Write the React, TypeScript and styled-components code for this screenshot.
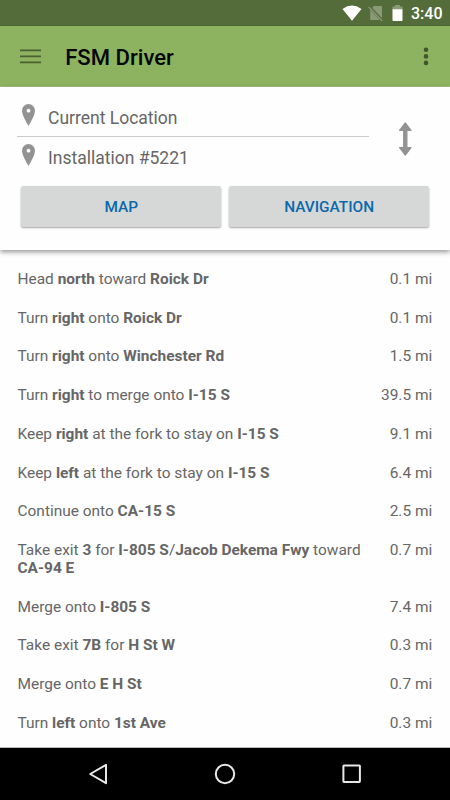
import React from "react";
import styled, { createGlobalStyle } from "styled-components";

const Global = createGlobalStyle`
  * { box-sizing: border-box; }
  body { margin: 0; background: #fefefe; font-family: Roboto, sans-serif; overflow: hidden; }
  svg { display: block; flex: none; }
`;

const Screen = styled.div`
  width: 450px;
  height: 800px;
  display: flex;
  flex-direction: column;
  background: #fefefe;
  color: #666;
`;

const StatusBar = styled.header`
  height: 26px;
  flex: none;
  display: flex;
  justify-content: flex-end;
  align-items: center;
  padding: 2px 8px 0 0;
  background: #546c39;
  border-bottom: 1px solid #4d6633;
`;

const Clock = styled.span`
  width: 31px;
  margin-left: 7px;
  font-size: 16px;
  font-weight: 500;
  line-height: 20px;
  padding-top: 1px;
  color: #fff;
  white-space: nowrap;
`;

const Toolbar = styled.div`
  height: 61px;
  flex: none;
  display: flex;
  align-items: center;
  padding: 0 19px 0 20px;
  background: #8db360;
  border-bottom: 1px solid #a3c17f;
`;

const Title = styled.h1`
  flex: 1;
  margin: 2px 0 0 24.2px;
  font-size: 22.1px;
  line-height: 28px;
  font-weight: 500;
  color: #050703;
`;

const RoutePanel = styled.section`
  height: 163px;
  flex: none;
  padding: 10px 21px 0 17px;
  background: #fefefe;
  box-shadow: 0 2px 5px rgba(0, 0, 0, 0.42);
  position: relative;
`;

const RouteTop = styled.div`
  display: flex;
`;

const Fields = styled.div`
  width: 352px;
`;

const Field = styled.div<{ $ruled?: boolean }>`
  height: 40px;
  display: flex;
  align-items: center;
  gap: 12px;
  padding: 2px 0 0 5px;
  font-size: 17.5px;
  line-height: 24px;
  border-bottom: 1px solid ${(p) => (p.$ruled ? "#cacaca" : "transparent")};
  svg { margin-bottom: 4px; }
`;

const Swap = styled.div`
  padding: 25px 0 0 30px;
`;

const Buttons = styled.div`
  display: flex;
  gap: 8px;
  padding: 9px 0 0 4.4px;
`;

const Button = styled.button`
  flex: 1 1 0;
  height: 41px;
  padding: 1px 0 0;
  border: 0;
  border-radius: 2.5px;
  background: #d6d8d7;
  box-shadow: 0 1px 2px rgba(0, 0, 0, 0.35);
  color: #0b69aa;
  font: 500 15.4px/20px Roboto, sans-serif;
`;

const Steps = styled.ul`
  flex: 1;
  margin: 0;
  padding: 10.3px 17.8px 0 17.5px;
  list-style: none;
  overflow: hidden;
`;

const Step = styled.li`
  display: flex;
  justify-content: space-between;
  padding: 10.5px 0;
  font-size: 15.45px;
  line-height: 17.77px;
  b { font-weight: 700; }
`;

const Instruction = styled.span`
  width: 346px;
`;

const Distance = styled.span`
  white-space: nowrap;
`;

const NavBar = styled.nav`
  height: 53px;
  flex: none;
  display: flex;
  justify-content: space-between;
  align-items: center;
  padding: 0 88px 0 88px;
  background: #000;
  border-top: 1px solid #b5bab5;
`;

const Pin = () => (
  <svg width="14" height="23" viewBox="0 0 14 23">
    <path
      fill="#929292"
      fillRule="evenodd"
      d="M6.5 0A6.5 6.5 0 0 0 0 6.5C0 11.2 4 17.5 6.5 22 9 17.5 13 11.2 13 6.5A6.5 6.5 0 0 0 6.5 0Zm0 4.8a1.9 1.9 0 1 1 0 3.8 1.9 1.9 0 0 1 0-3.8Z"
    />
  </svg>
);

const steps: [React.ReactNode, string][] = [
  [<>Head <b>north</b> toward <b>Roick Dr</b></>, "0.1 mi"],
  [<>Turn <b>right</b> onto <b>Roick Dr</b></>, "0.1 mi"],
  [<>Turn <b>right</b> onto <b>Winchester Rd</b></>, "1.5 mi"],
  [<>Turn <b>right</b> to merge onto <b>I-15 S</b></>, "39.5 mi"],
  [<>Keep <b>right</b> at the fork to stay on <b>I-15 S</b></>, "9.1 mi"],
  [<>Keep <b>left</b> at the fork to stay on <b>I-15 S</b></>, "6.4 mi"],
  [<>Continue onto <b>CA-15 S</b></>, "2.5 mi"],
  [<>Take exit <b>3</b> for <b>I-805 S</b>/<b>Jacob Dekema Fwy</b> toward <b>CA-94 E</b></>, "0.7 mi"],
  [<>Merge onto <b>I-805 S</b></>, "7.4 mi"],
  [<>Take exit <b>7B</b> for <b>H St W</b></>, "0.3 mi"],
  [<>Merge onto <b>E H St</b></>, "0.7 mi"],
  [<>Turn <b>left</b> onto <b>1st Ave</b></>, "0.3 mi"],
];

export default function App() {
  return (
    <Screen>
      <Global />
      <StatusBar>
        <svg width="62" height="17" viewBox="0 0 62 17">
          <path fill="#fff" d="M0.5 4Q10 -2.8 19.5 4L10 15.7Z" />
          <path fill="#8a9978" d="M32 1H39.2Q40 1 40 1.8V14.2Q40 15 39.2 15H29Q28.2 15 28.2 14.2V4.8Z" />
          <path stroke="#546c39" strokeWidth="3" d="M26.6 1.2L41 16.2" />
          <path stroke="#8a9978" strokeWidth="1.2" d="M26.6 2L40.2 16" />
          <path fill="#8a9978" d="M53 0H58V1.5H60.5V5H50.5V1.5H53Z" />
          <path fill="#fff" d="M50.5 4.3H60.5V15.3Q60.5 16 59.8 16H51.2Q50.5 16 50.5 15.3Z" />
        </svg>
        <Clock>3:40</Clock>
      </StatusBar>
      <Toolbar>
        <svg width="21" height="16" viewBox="0 0 21 16">
          <path stroke="#4a5f33" strokeWidth="1.9" d="M0 2.4H21M0 8.4H21M0 14.4H21" />
        </svg>
        <Title>FSM Driver</Title>
        <svg width="10" height="20" viewBox="0 0 10 20">
          <g fill="#42552e">
            <circle cx="5" cy="3.8" r="2.3" />
            <circle cx="5" cy="10.4" r="2.3" />
            <circle cx="5" cy="16.9" r="2.3" />
          </g>
        </svg>
      </Toolbar>
      <RoutePanel>
        <RouteTop>
          <Fields>
            <Field $ruled><Pin />Current Location</Field>
            <Field><Pin />Installation #5221</Field>
          </Fields>
          <Swap>
            <svg width="13" height="34" viewBox="0 0 13 34">
              <path
                fill="#929292"
                stroke="#929292"
                strokeWidth="1.2"
                strokeLinejoin="round"
                d="M6.3 .9L12 8.4H7.9V25.6H12L6.3 33.1 .6 25.6H4.7V8.4H.6Z"
              />
            </svg>
          </Swap>
        </RouteTop>
        <Buttons>
          <Button>MAP</Button>
          <Button>NAVIGATION</Button>
        </Buttons>
      </RoutePanel>
      <Steps>
        {steps.map(([text, distance], i) => (
          <Step key={i}>
            <Instruction>{text}</Instruction>
            <Distance>{distance}</Distance>
          </Step>
        ))}
      </Steps>
      <NavBar>
        <svg width="20" height="22" viewBox="0 0 20 22">
          <path fill="none" stroke="#e8e8e8" strokeWidth="2" strokeLinejoin="round" d="M18 1.8V20.2L2.2 11Z" />
        </svg>
        <svg width="22" height="22" viewBox="0 0 22 22">
          <circle cx="11" cy="11" r="9.2" fill="none" stroke="#e8e8e8" strokeWidth="2" />
        </svg>
        <svg width="20" height="20" viewBox="0 0 20 20">
          <rect x="1.4" y="1.4" width="16.5" height="16.5" rx=".6" fill="none" stroke="#e8e8e8" strokeWidth="2" />
        </svg>
      </NavBar>
    </Screen>
  );
}
